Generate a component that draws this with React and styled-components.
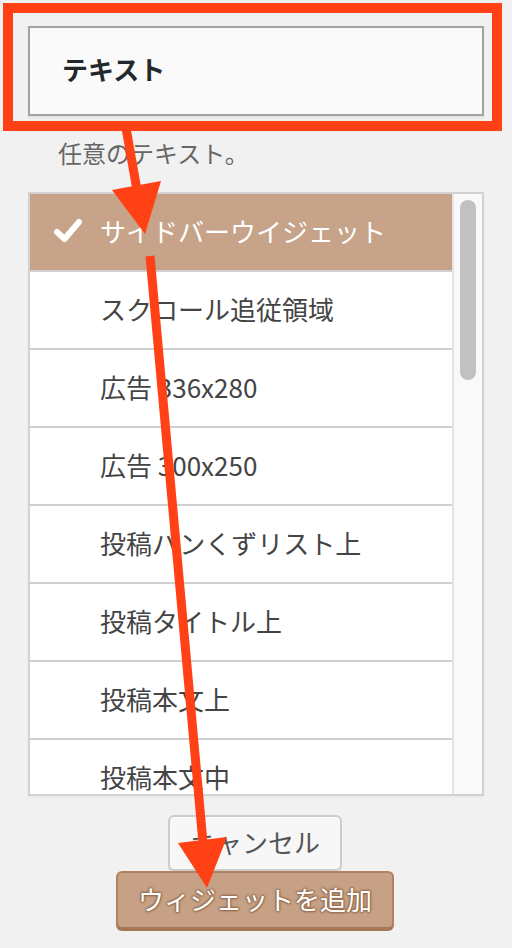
import React from "react";
import styled, { createGlobalStyle } from "styled-components";

const Global = createGlobalStyle`
  html, body { margin: 0; padding: 0; background: #f1f1f1; }
  body { font-family: "Noto Sans CJK JP", "Noto Sans", sans-serif; }
  * { box-sizing: border-box; }
`;

const Page = styled.div`
  position: relative;
  width: 512px;
  height: 948px;
  padding: 26px 28px 0 28px;
  display: flex;
  flex-direction: column;
  overflow: hidden;
`;

const TitleBox = styled.div`
  height: 90px;
  border: 2px solid #a3a3a3;
  background: #fafafa;
  box-shadow: 0 2px 2px rgba(0, 0, 0, 0.06);
  display: flex;
  align-items: center;
  padding-left: 32px;
  padding-bottom: 5px;
  font-size: 26px;
  font-weight: 700;
  color: #23282d;
`;

const Description = styled.p`
  margin: 20px 0 22px 30px;
  font-size: 24px;
  line-height: 34px;
  color: #666;
`;

const ListBox = styled.div`
  height: 604px;
  border: 2px solid #d2d2d2;
  background: #fff;
  display: flex;
  box-shadow: 0 1px 2px rgba(0, 0, 0, 0.05);
`;

const List = styled.ul`
  list-style: none;
  margin: 0;
  padding: 0;
  flex: 1;
  overflow: hidden;
`;

const Row = styled.li`
  height: 78px;
  border-bottom: 2px solid #d0d0d0;
  display: flex;
  align-items: center;
  padding-left: 70px;
  padding-bottom: 4px;
  position: relative;
  font-size: 26px;
  color: ${(p) => (p.$selected ? "#fff" : "#444")};
  background: ${(p) => (p.$selected ? "#c6a389" : "#fff")};
`;

const Check = styled.svg`
  position: absolute;
  left: 24px;
  top: 24px;
  width: 28px;
  height: 26px;
`;

const Track = styled.div`
  width: 30px;
  border-left: 2px solid #e4e4e4;
  background: #f9f9f9;
  padding: 6px 0 0 6px;
`;

const Thumb = styled.div`
  width: 16px;
  height: 180px;
  border-radius: 8px;
  background: #c1c1c1;
`;

const Buttons = styled.div`
  display: flex;
  flex-direction: column;
  align-items: center;
  margin-top: 19px;
  margin-right: 2px;
`;

const CancelButton = styled.button`
  height: 56px;
  width: 174px;
  border: 2px solid #cccccc;
  border-radius: 6px;
  background: #f7f7f7;
  color: #555;
  font-family: inherit;
  font-size: 26px;
  padding: 0 0 3px 0;
  box-shadow: 0 2px 0 #e2e2e2;
`;

const AddButton = styled.button`
  height: 58px;
  width: 278px;
  border: 2px solid #b28362;
  border-bottom-color: #a67656;
  border-radius: 6px;
  background: #c6a185;
  color: #fff;
  font-family: inherit;
  font-size: 26px;
  padding: 0 0 3px 0;
  box-shadow: 0 2px 0 #a67656;
  text-shadow: 0 -1px 2px #946a4c, 1px 0 2px #946a4c, 0 1px 2px #946a4c,
    -1px 0 2px #946a4c;
`;

const Overlay = styled.svg`
  position: absolute;
  left: 0;
  top: 0;
  width: 512px;
  height: 948px;
  pointer-events: none;
`;

const items = [
  "サイドバーウイジェット",
  "スクロール追従領域",
  "広告 336x280",
  "広告 300x250",
  "投稿パンくずリスト上",
  "投稿タイトル上",
  "投稿本文上",
  "投稿本文中",
];

export default function App() {
  const red = "#ff4115";
  return (
    <>
      <Global />
      <Page>
        <TitleBox>テキスト</TitleBox>
        <Description>任意のテキスト。</Description>
        <ListBox>
          <List>
            {items.map((t, i) => (
              <Row key={t} $selected={i === 0}>
                {i === 0 && (
                  <Check viewBox="0 0 28 26">
                    <path
                      d="M3 14 L10.5 21 L25 4"
                      fill="none"
                      stroke="#fff"
                      strokeWidth="6"
                      strokeLinecap="round"
                      strokeLinejoin="round"
                    />
                  </Check>
                )}
                {t}
              </Row>
            ))}
          </List>
          <Track>
            <Thumb />
          </Track>
        </ListBox>
        <Buttons>
          <CancelButton>キャンセル</CancelButton>
          <AddButton>ウィジェットを追加</AddButton>
        </Buttons>
        <Overlay viewBox="0 0 512 948">
          <rect x="8" y="8" width="489" height="118" fill="none" stroke={red} strokeWidth="10" />
          <line x1="126" y1="128" x2="137" y2="190" stroke={red} strokeWidth="9" />
          <polygon points="112,190 161,181 145,234" fill={red} />
          <line x1="150" y1="256" x2="203" y2="843" stroke={red} strokeWidth="9" />
          <polygon points="178,843 227,837 207,888" fill={red} />
        </Overlay>
      </Page>
    </>
  );
}
